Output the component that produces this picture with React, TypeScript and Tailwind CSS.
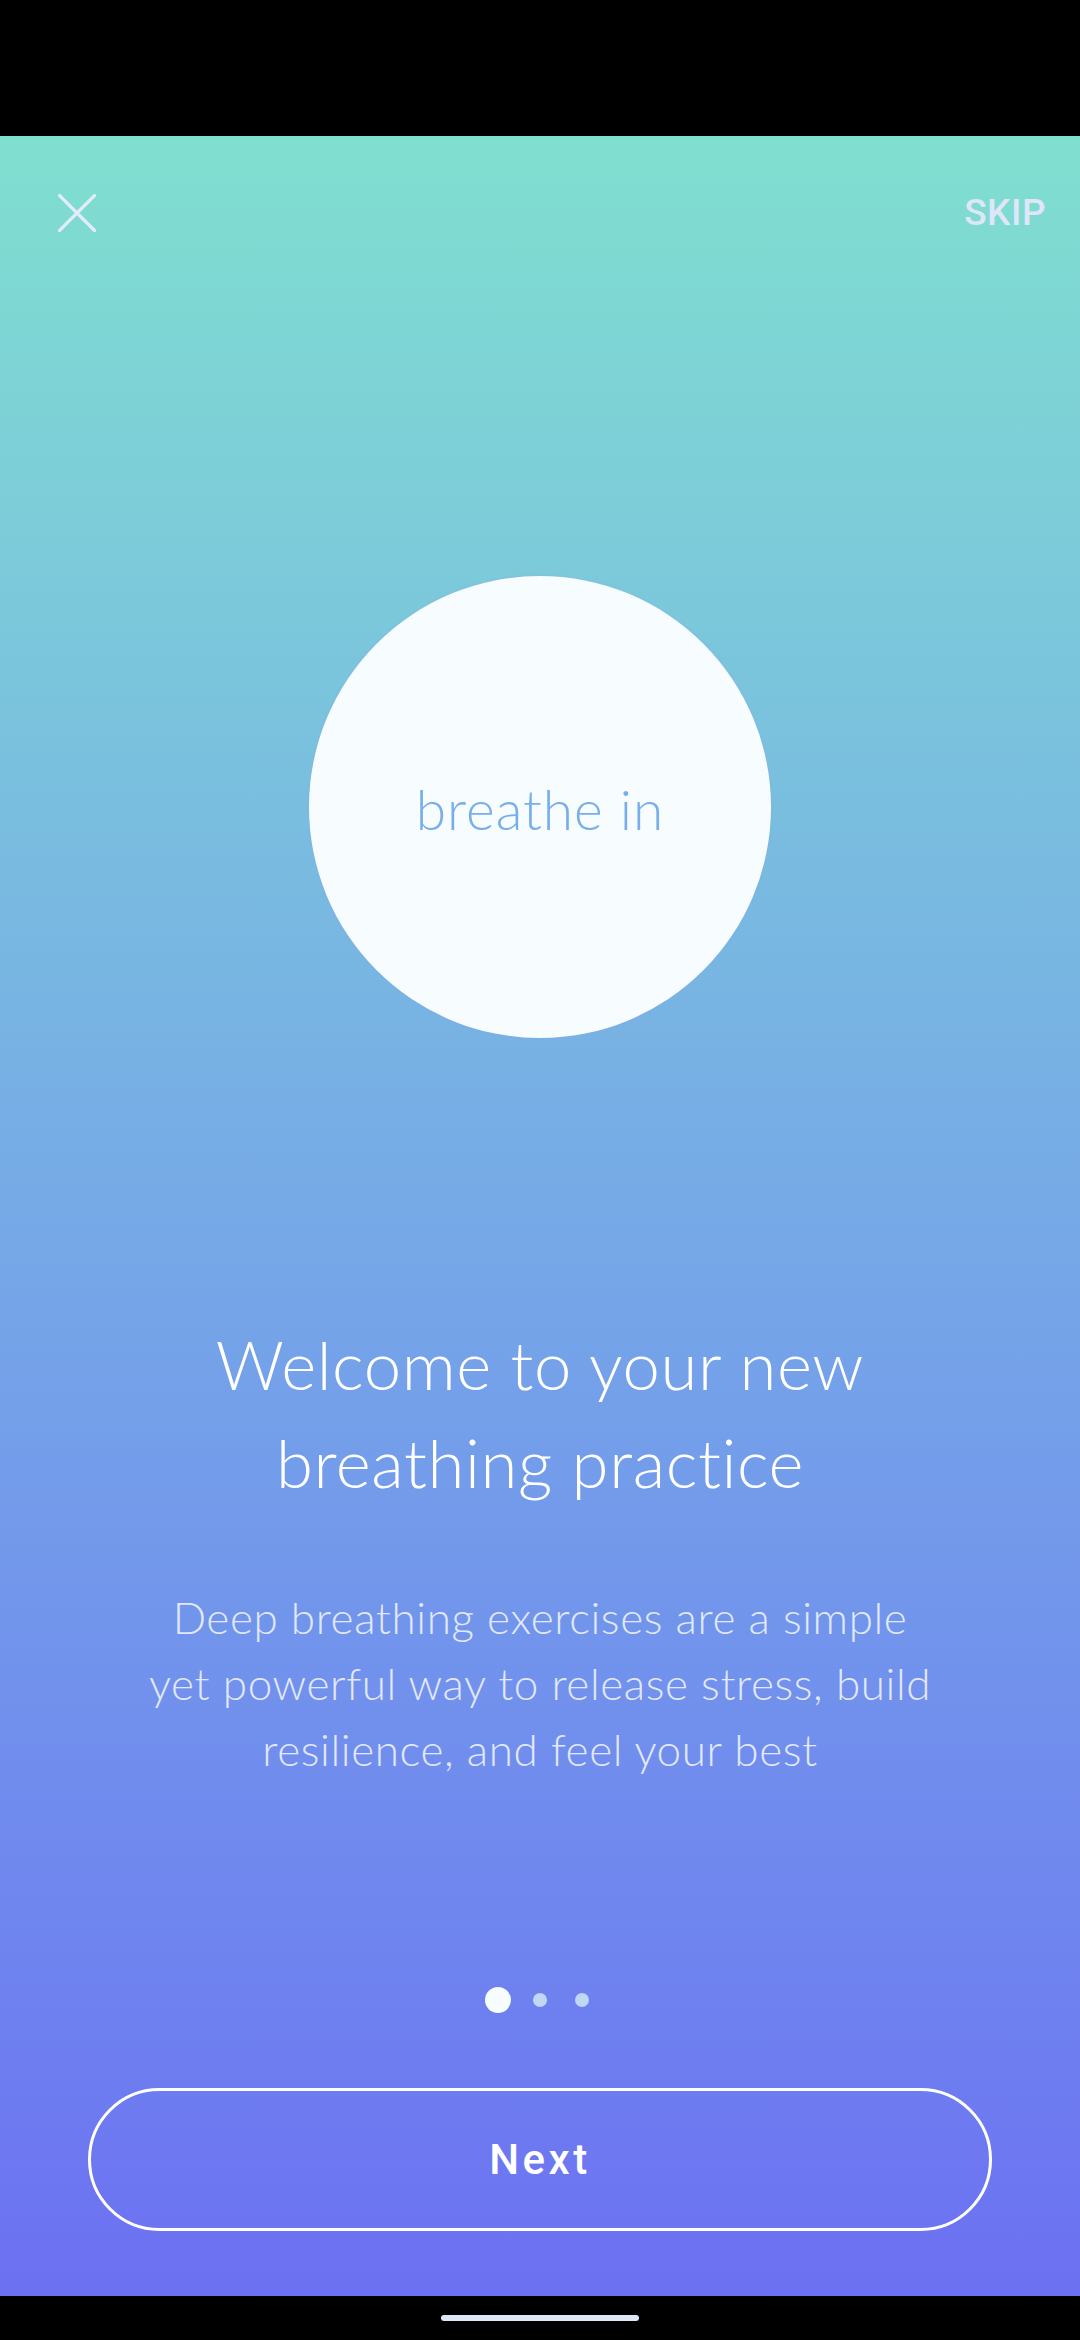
import React from 'react';

const DOTS = [true, false, false];

function CloseIcon() {
  return (
    <svg width="38" height="38" viewBox="0 0 38 38" fill="none">
      <path d="M1.5 1.5L36.5 36.5M36.5 1.5L1.5 36.5" stroke="#e3ecf8" strokeWidth="3.2" strokeLinecap="square" />
    </svg>
  );
}

export default function App() {
  return (
    <div className="w-[1080px] h-[2340px] flex flex-col bg-black overflow-hidden">
      {/* Status bar */}
      <div className="h-[136px] shrink-0 bg-black" />

      {/* Onboarding */}
      <div className="flex-1 flex flex-col items-center bg-linear-to-b from-[#80dfcf] via-[#76a9e7] to-[#6c70f2]">
        <div className="w-full h-[154px] flex items-center justify-between pl-[58px] pr-[34px]">
          <button className="flex items-center">
            <CloseIcon />
          </button>
          <span className="text-[37px] font-medium text-[#dfe6f8] font-['Roboto',sans-serif] tracking-[0.5px]">SKIP</span>
        </div>

        <div className="mt-[286px] w-[462px] h-[462px] rounded-full bg-[#f7fcff] flex items-center justify-center shadow-[0_0_2px_rgba(160,160,235,0.6)]">
          <span className="text-[55px] font-light text-[#78afea] font-['Lato',sans-serif] tracking-[1px] mt-[4px]">breathe in</span>
        </div>

        <h1 className="mt-[277px] text-center text-white text-[67px] leading-[98px] tracking-[0.6px] font-light font-['Lato',sans-serif]">
          Welcome to your new
          <br />
          breathing practice
        </h1>

        <p className="mt-[73px] text-center text-[#e1e8fa] text-[44px] leading-[66px] tracking-[0.6px] font-light font-['Lato',sans-serif]">
          Deep breathing exercises are a simple
          <br />
          yet powerful way to release stress, build
          <br />
          resilience, and feel your best
        </p>

        <div className="mt-[205px] h-[26px] flex items-center">
          {DOTS.map((active, i) => (
            <div key={i} className="w-[42px] flex justify-center">
              {active ? (
                <div className="w-[26px] h-[26px] rounded-full bg-[#f7fcff]" />
              ) : (
                <div className="w-[14px] h-[14px] rounded-full bg-[#c2d6f6]" />
              )}
            </div>
          ))}
        </div>

        <button className="mt-[75px] w-[904px] h-[143px] rounded-full border-[3px] border-white flex items-center justify-center">
          <span className="text-[42px] font-medium text-white font-['Roboto',sans-serif] tracking-[3.5px]">Next</span>
        </button>
      </div>

      {/* Navigation bar */}
      <div className="h-[44px] shrink-0 bg-black flex items-center justify-center">
        <div className="w-[198px] h-[6px] rounded-full bg-[#dde8f7]" />
      </div>
    </div>
  );
}
